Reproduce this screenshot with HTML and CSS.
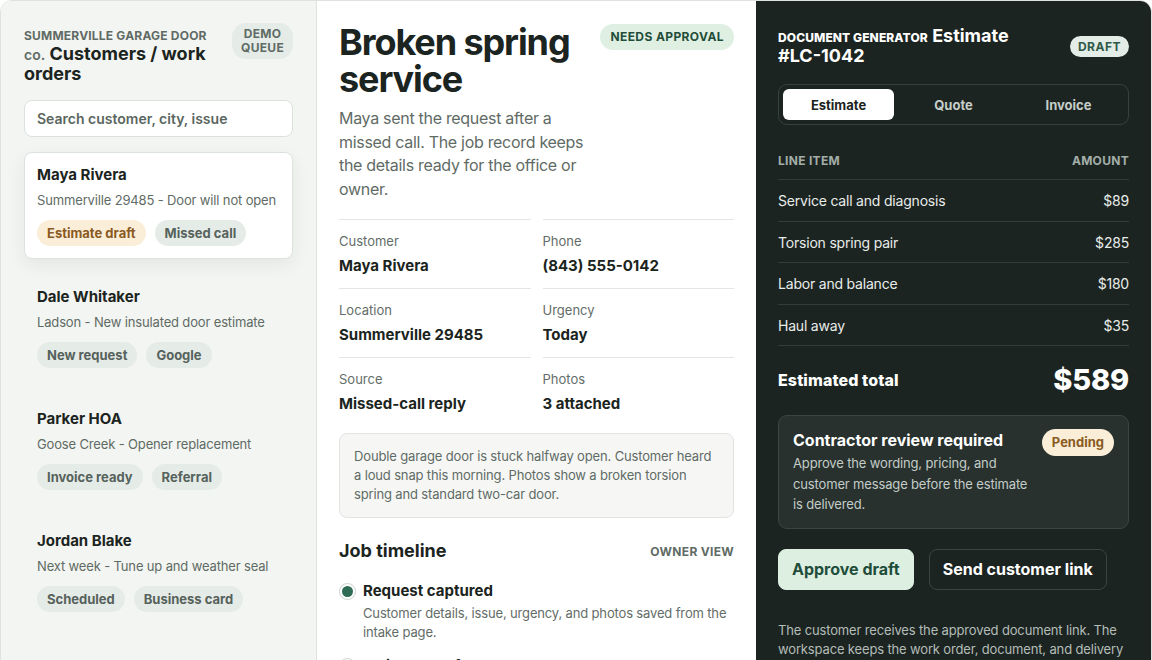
FILE: index.html
```html
<!DOCTYPE html>
<html lang="en">
<head>
<meta charset="utf-8">
<title>Summerville Garage Door Co. - Work orders</title>
<link rel="stylesheet" href="styles.css">
</head>
<body>
<div class="app">
  <aside class="queue">
    <div class="queue-head">
      <h1 class="queue-title"><span class="eyebrow">Summerville Garage Door</span> <span class="co">co.</span> Customers / work orders</h1>
      <span class="demo-badge">Demo<br>queue</span>
    </div>
    <input class="search" type="text" placeholder="Search customer, city, issue">
    <ul class="jobs">
      <li class="job active">
        <div class="job-name">Maya Rivera</div>
        <div class="job-sub">Summerville 29485 - Door will not open</div>
        <div class="tags"><span class="tag tag-warm">Estimate draft</span><span class="tag">Missed call</span></div>
      </li>
      <li class="job">
        <div class="job-name">Dale Whitaker</div>
        <div class="job-sub">Ladson - New insulated door estimate</div>
        <div class="tags"><span class="tag">New request</span><span class="tag">Google</span></div>
      </li>
      <li class="job">
        <div class="job-name">Parker HOA</div>
        <div class="job-sub">Goose Creek - Opener replacement</div>
        <div class="tags"><span class="tag">Invoice ready</span><span class="tag">Referral</span></div>
      </li>
      <li class="job">
        <div class="job-name">Jordan Blake</div>
        <div class="job-sub">Next week - Tune up and weather seal</div>
        <div class="tags"><span class="tag">Scheduled</span><span class="tag">Business card</span></div>
      </li>
    </ul>
  </aside>

  <main class="detail">
    <header class="detail-head">
      <div class="detail-intro">
        <h2 class="detail-title">Broken spring service</h2>
        <p class="detail-lede">Maya sent the request after a missed call. The job record keeps the details ready for the office or owner.</p>
      </div>
      <span class="status">Needs approval</span>
    </header>

    <dl class="facts">
      <div class="fact"><dt>Customer</dt><dd>Maya Rivera</dd></div>
      <div class="fact"><dt>Phone</dt><dd>(843) 555-0142</dd></div>
      <div class="fact"><dt>Location</dt><dd>Summerville 29485</dd></div>
      <div class="fact"><dt>Urgency</dt><dd>Today</dd></div>
      <div class="fact"><dt>Source</dt><dd>Missed-call reply</dd></div>
      <div class="fact"><dt>Photos</dt><dd>3 attached</dd></div>
    </dl>

    <div class="note">Double garage door is stuck halfway open. Customer heard a loud snap this morning. Photos show a broken torsion spring and standard two-car door.</div>

    <section class="timeline">
      <div class="timeline-head">
        <h3>Job timeline</h3>
        <span class="timeline-view">Owner view</span>
      </div>
      <ol class="steps">
        <li class="step done">
          <span class="dot"></span>
          <div class="step-body">
            <strong>Request captured</strong>
            <p>Customer details, issue, urgency, and photos saved from the intake page.</p>
          </div>
        </li>
        <li class="step">
          <span class="dot"></span>
          <div class="step-body">
            <strong>Estimate drafted</strong>
            <p>Line items prepared from the service catalog for owner review.</p>
          </div>
        </li>
      </ol>
    </section>
  </main>

  <aside class="doc">
    <div class="doc-head">
      <h2 class="doc-title"><span class="doc-eyebrow">Document generator</span> Estimate <span class="nowrap">#LC-1042</span></h2>
      <span class="draft">Draft</span>
    </div>

    <div class="tabs">
      <button class="tab active">Estimate</button>
      <button class="tab">Quote</button>
      <button class="tab">Invoice</button>
    </div>

    <table class="lines">
      <thead>
        <tr><th>Line item</th><th class="amt">Amount</th></tr>
      </thead>
      <tbody>
        <tr><td>Service call and diagnosis</td><td class="amt">$89</td></tr>
        <tr><td>Torsion spring pair</td><td class="amt">$285</td></tr>
        <tr><td>Labor and balance</td><td class="amt">$180</td></tr>
        <tr><td>Haul away</td><td class="amt">$35</td></tr>
      </tbody>
    </table>

    <div class="total">
      <span class="total-label">Estimated total</span>
      <span class="total-value">$589</span>
    </div>

    <div class="review">
      <div class="review-body">
        <div class="review-title">Contractor review required</div>
        <p class="review-text">Approve the wording, pricing, and customer message before the estimate is delivered.</p>
      </div>
      <span class="pending">Pending</span>
    </div>

    <div class="actions">
      <button class="btn btn-approve">Approve draft</button>
      <button class="btn btn-ghost">Send customer link</button>
    </div>

    <p class="doc-foot">The customer receives the approved document link. The workspace keeps the work order, document, and delivery status together.</p>
  </aside>
</div>
</body>
</html>
```

FILE: styles.css
```css
* {
  box-sizing: border-box;
  margin: 0;
  padding: 0;
}

body {
  font-family: Inter, "Noto Sans", "Liberation Sans", sans-serif;
  color: #1b2420;
  background: #ffffff;
}

.nowrap {
  white-space: nowrap;
}

.app {
  display: grid;
  grid-template-columns: 316px 439px 395px;
  width: 1152px;
  min-height: 660px;
  border: 1px solid #dfe3e0;
  border-radius: 12px;
  overflow: hidden;
}

/* ---------- Left queue ---------- */
.queue {
  background: #f3f5f2;
  border-right: 1px solid #dfe3e0;
  padding: 23px 23px 24px 23px;
}

.queue-head {
  display: flex;
  align-items: flex-start;
  gap: 12px;
}

.queue-title {
  flex: 1;
  font-size: 18px;
  font-weight: 700;
  line-height: 20px;
  color: #1b2420;
}

.eyebrow {
  font-size: 12px;
  font-weight: 700;
  line-height: 12px;
  text-transform: uppercase;
  letter-spacing: 0.2px;
  color: #5f6b65;
}

.co {
  font-size: 14px;
  font-weight: 600;
  line-height: 14px;
  color: #5f6b65;
}

.demo-badge {
  flex-shrink: 0;
  margin-top: -1px;
  padding: 4px 9px;
  border-radius: 14px;
  background: #e5ebe7;
  color: #5f6b65;
  font-size: 12px;
  font-weight: 700;
  line-height: 14px;
  text-transform: uppercase;
  letter-spacing: 0.3px;
  text-align: center;
}

.search {
  display: block;
  width: 100%;
  height: 37px;
  margin-top: 16px;
  padding: 0 12px;
  border: 1px solid #dbe1dd;
  border-radius: 8px;
  background: #ffffff;
  font-family: inherit;
  font-size: 14px;
  font-weight: 600;
  color: #1b2420;
  outline: none;
}

.search::placeholder {
  color: #5a6660;
}

.jobs {
  list-style: none;
  margin-top: 15px;
  display: flex;
  flex-direction: column;
  gap: 15px;
}

.job {
  padding: 12px 12px 12px;
  border: 1px solid transparent;
  border-radius: 8px;
}

.job.active {
  background: #ffffff;
  border-color: #dce2de;
  box-shadow: 0 6px 18px rgba(24, 44, 34, 0.07);
}

.job-name {
  font-size: 15px;
  font-weight: 700;
  line-height: 20px;
  color: #1b2420;
}

.job-sub {
  margin-top: 6px;
  font-size: 13px;
  line-height: 18px;
  letter-spacing: -0.15px;
  color: #5f6b65;
  white-space: nowrap;
}

.tags {
  display: flex;
  gap: 9px;
  margin-top: 11px;
}

.tag {
  padding: 4px 10px;
  border-radius: 13px;
  background: #e5ebe7;
  color: #56625c;
  font-size: 13px;
  font-weight: 700;
  line-height: 18px;
}

.tag-warm {
  background: #fbeed9;
  color: #8a5a22;
}

/* ---------- Middle detail ---------- */
.detail {
  background: #ffffff;
  padding: 22px 22px 24px;
}

.detail-head {
  display: flex;
  align-items: flex-start;
  gap: 16px;
}

.detail-intro {
  flex: 1;
}

.detail-title {
  font-size: 36px;
  font-weight: 700;
  line-height: 37px;
  letter-spacing: -1.1px;
  color: #1b2420;
  padding-top: 1px;
}

.detail-lede {
  margin-top: 9px;
  font-size: 16px;
  line-height: 23.5px;
  letter-spacing: -0.3px;
  color: #5f6b65;
}

.status {
  flex-shrink: 0;
  margin-top: 1px;
  padding: 5px 10px;
  border-radius: 13px;
  background: #dff0e3;
  color: #1f4d3a;
  font-size: 12px;
  font-weight: 700;
  line-height: 16px;
  letter-spacing: 0.4px;
  text-transform: uppercase;
}

.facts {
  display: grid;
  grid-template-columns: 1fr 1fr;
  column-gap: 12px;
  margin-top: 18px;
}

.fact {
  border-top: 1px solid #e3e7e4;
  padding: 12px 0;
}

.fact dt {
  font-size: 13px;
  line-height: 18px;
  color: #636d68;
}

.fact dd {
  margin-top: 6px;
  font-size: 15px;
  font-weight: 700;
  line-height: 20px;
  color: #1b2420;
}

.note {
  margin-top: 7px;
  padding: 13px 14px;
  border: 1px solid #e1e5e2;
  border-radius: 8px;
  background: #f6f7f5;
  font-size: 13px;
  line-height: 19px;
  letter-spacing: -0.15px;
  color: #5f6b65;
}

.timeline {
  margin-top: 22px;
}

.timeline-head {
  display: flex;
  align-items: center;
  justify-content: space-between;
}

.timeline-head h3 {
  font-size: 18px;
  font-weight: 700;
  line-height: 22px;
  color: #1b2420;
}

.timeline-view {
  font-size: 12px;
  font-weight: 700;
  letter-spacing: 0.3px;
  text-transform: uppercase;
  color: #5f6b65;
}

.steps {
  list-style: none;
  margin-top: 19px;
  display: flex;
  flex-direction: column;
  gap: 14px;
}

.step {
  display: flex;
  align-items: flex-start;
  gap: 7px;
}

.dot {
  flex-shrink: 0;
  width: 17px;
  height: 17px;
  margin-top: 2px;
  border: 1px solid #c9d3cd;
  border-radius: 50%;
  background: #ffffff;
  display: flex;
  align-items: center;
  justify-content: center;
}

.step.done .dot::after {
  content: "";
  width: 11px;
  height: 11px;
  border-radius: 50%;
  background: #2f6b55;
}

.step-body strong {
  display: block;
  font-size: 15px;
  font-weight: 700;
  line-height: 20px;
  color: #1b2420;
}

.step-body p {
  margin-top: 3px;
  font-size: 13px;
  line-height: 19px;
  letter-spacing: -0.15px;
  color: #636d68;
}

/* ---------- Right document ---------- */
.doc {
  background: #1c2421;
  padding: 25px 22px 24px;
  color: #ffffff;
}

.doc-head {
  display: flex;
  align-items: center;
  gap: 12px;
}

.doc-title {
  flex: 1;
  font-size: 18px;
  font-weight: 700;
  line-height: 20px;
  color: #ffffff;
}

.doc-eyebrow {
  font-size: 12px;
  font-weight: 800;
  line-height: 12px;
  text-transform: uppercase;
  letter-spacing: 0.1px;
}

.draft {
  flex-shrink: 0;
  padding: 3px 8px;
  border-radius: 11px;
  background: #e3ece6;
  color: #2f5a47;
  font-size: 12px;
  font-weight: 700;
  line-height: 15px;
  letter-spacing: 0.5px;
  text-transform: uppercase;
}

.tabs {
  display: grid;
  grid-template-columns: repeat(3, 1fr);
  gap: 4px;
  margin-top: 18px;
  padding: 4px;
  border: 1px solid #37423d;
  border-radius: 9px;
}

.tab {
  height: 31px;
  border: 0;
  border-radius: 6px;
  background: transparent;
  font-family: inherit;
  font-size: 13px;
  font-weight: 700;
  color: #c6cec9;
}

.tab.active {
  background: #ffffff;
  color: #1b2420;
}

.lines {
  width: 100%;
  margin-top: 28px;
  border-collapse: collapse;
}

.lines th {
  padding: 0 0 10px;
  border-bottom: 1px solid #333d38;
  font-size: 12px;
  font-weight: 700;
  line-height: 16px;
  letter-spacing: 0.3px;
  text-transform: uppercase;
  text-align: left;
  color: #a3aea8;
}

.lines td {
  padding: 11px 0 9.5px;
  border-bottom: 1px solid #333d38;
  font-size: 14px;
  line-height: 20px;
  letter-spacing: -0.2px;
  color: #e8ece9;
}

.lines .amt {
  text-align: right;
}

.total {
  display: flex;
  align-items: center;
  justify-content: space-between;
  padding: 17px 0 18px;
}

.total-label {
  font-size: 16px;
  font-weight: 800;
  letter-spacing: 0.1px;
  color: #ffffff;
}

.total-value {
  font-size: 29px;
  font-weight: 800;
  line-height: 34px;
  letter-spacing: -0.2px;
  color: #ffffff;
}

.review {
  display: flex;
  align-items: flex-start;
  gap: 12px;
  padding: 13px 14px 13px;
  border: 1px solid #3b4641;
  border-radius: 9px;
  background: #28312e;
}

.review-body {
  flex: 1;
}

.review-title {
  font-size: 16px;
  font-weight: 700;
  line-height: 22px;
  color: #ffffff;
}

.review-text {
  margin-top: 2px;
  font-size: 13px;
  line-height: 20.5px;
  letter-spacing: -0.15px;
  color: #c3ccc7;
}

.pending {
  flex-shrink: 0;
  padding: 4px 10px;
  border-radius: 14px;
  background: #fbeed8;
  color: #8a5a22;
  font-size: 13px;
  font-weight: 700;
  line-height: 19px;
}

.actions {
  display: flex;
  gap: 15px;
  margin-top: 20px;
}

.btn {
  height: 41px;
  padding: 0 13px;
  border-radius: 8px;
  font-family: inherit;
  font-size: 16px;
  font-weight: 700;
}

.btn-approve {
  border: 1px solid #dcefe1;
  background: #dcefe1;
  color: #1f4d3a;
}

.btn-ghost {
  border: 1px solid #3a4540;
  background: transparent;
  color: #ffffff;
}

.doc-foot {
  margin-top: 31px;
  font-size: 13px;
  line-height: 19.5px;
  letter-spacing: -0.15px;
  color: #b3bdb8;
}
```
